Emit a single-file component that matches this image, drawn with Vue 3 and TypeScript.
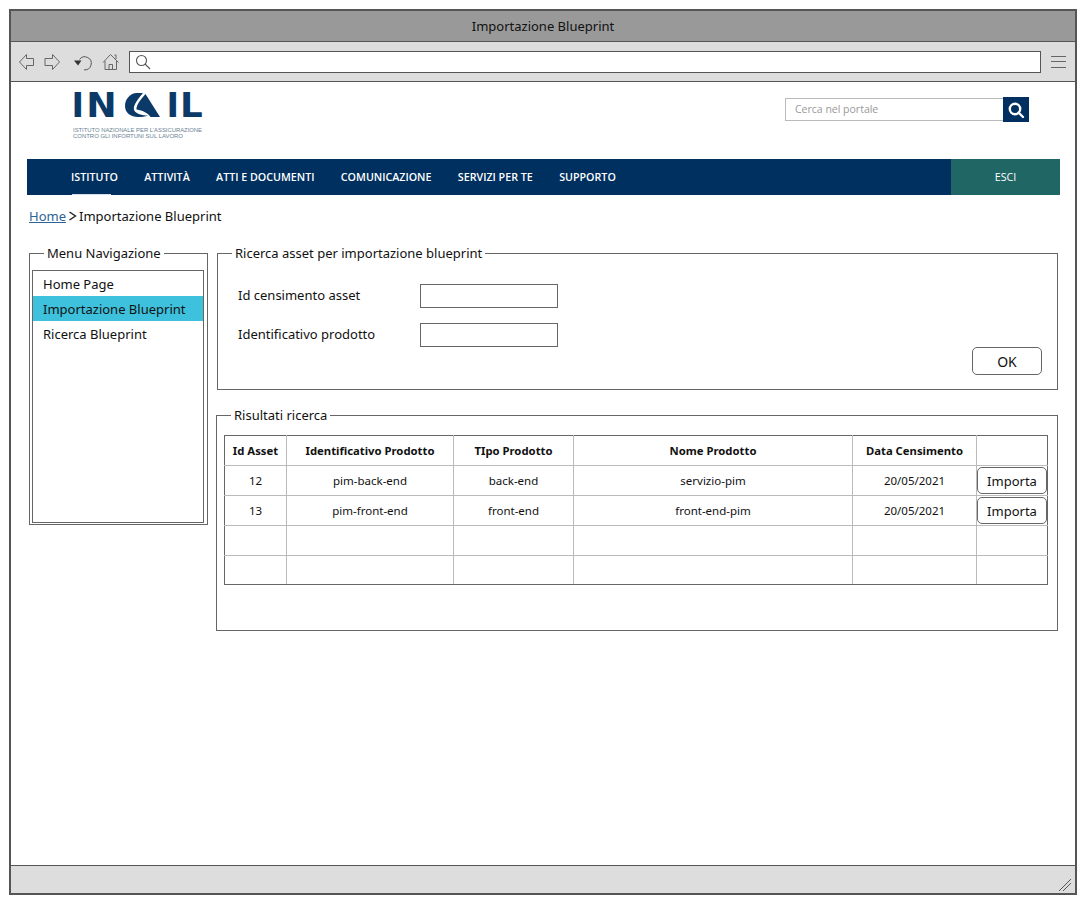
<script setup lang="ts">
interface Row { id: string; code: string; type: string; name: string; date: string; action: boolean }
const navItems: string[] = ['ISTITUTO', 'ATTIVITÀ', 'ATTI E DOCUMENTI', 'COMUNICAZIONE', 'SERVIZI PER TE', 'SUPPORTO']
const menuItems: string[] = ['Home Page', 'Importazione Blueprint', 'Ricerca Blueprint']
const headers: string[] = ['Id Asset', 'Identificativo Prodotto', 'TIpo Prodotto', 'Nome Prodotto', 'Data Censimento', '']
const rows: Row[] = [
  { id: '12', code: 'pim-back-end', type: 'back-end', name: 'servizio-pim', date: '20/05/2021', action: true },
  { id: '13', code: 'pim-front-end', type: 'front-end', name: 'front-end-pim', date: '20/05/2021', action: true },
  { id: '', code: '', type: '', name: '', date: '', action: false },
  { id: '', code: '', type: '', name: '', date: '', action: false }
]
</script>

<template>
  <div class="window">
    <div class="titlebar">Importazione Blueprint</div>
    <div class="toolbar">
      <svg class="tool-icons" width="104" height="22" viewBox="0 0 104 22" fill="none" stroke="#666" stroke-width="1">
        <path d="M1.5 11 L8.5 3.5 V7.5 H15.5 V14.5 H8.5 V18.5 Z" />
        <path d="M41.5 11 L34.5 3.5 V7.5 H27 V14.5 H34.5 V18.5 Z" />
        <path d="M61.5 8.5 A6.5 6.5 0 1 1 66 18.8" stroke="#555" />
        <path d="M56 9.5 H63.5 L60 14.5 Z" fill="#333" stroke="none" />
        <path d="M85 11.5 L92.5 3.5 L100.5 11.5 M87 10 V18.5 H98.5 V10 M91 18.5 V13.5 H94.5 V18.5 M96.5 4 H98 V8" />
      </svg>
      <div class="address">
        <svg width="16" height="16" viewBox="0 0 16 16" fill="none" stroke="#555" stroke-width="1.1">
          <circle cx="6.5" cy="6.5" r="5" />
          <path d="M10 10 L15 15" />
        </svg>
      </div>
      <svg class="burger" width="15" height="12" viewBox="0 0 15 12" stroke="#666" stroke-width="1">
        <path d="M0 .5 H15 M0 5.5 H15 M0 11.5 H15" />
      </svg>
    </div>

    <main class="page">
      <header class="masthead">
        <svg class="logo" width="134" height="56" viewBox="-4 -9 134 56" role="img" aria-label="INAIL">
          <g fill="#0b3a68" font-family="'DejaVu Sans', sans-serif" font-weight="700">
            <text transform="translate(-1.6 24) scale(1.02 1)" font-size="33">I</text>
            <text transform="translate(13.2 24) scale(1.1 1)" font-size="33">N</text>
            <path d="M70 0 H63 C56 1 52 7 52 13 C52 20 58 24 65 24 C69 24 72 23.5 75 22.5 C69 22.5 63 21 61 17 C60 12 65 6 70 0 Z" />
            <path d="M72.5 1 L87 24 H77.5 C75 20 70 17.5 63.5 16.5 C63 12 68 6 72.5 1 Z" />
            <text transform="translate(93.4 24) scale(1.02 1)" font-size="33">I</text>
            <text transform="translate(107 24) scale(1.08 1)" font-size="33">L</text>
          </g>
          <g fill="#6a7f94" font-family="'Liberation Sans', sans-serif" font-size="5.6">
            <text x="0" y="39" textLength="129" lengthAdjust="spacingAndGlyphs">ISTITUTO NAZIONALE PER L'ASSICURAZIONE</text>
            <text x="0" y="44.5" textLength="110" lengthAdjust="spacingAndGlyphs">CONTRO GLI INFORTUNI SUL LAVORO</text>
          </g>
        </svg>
        <div class="search">
          <div class="search-field">Cerca nel portale</div>
          <div class="search-btn">
            <svg width="18" height="18" viewBox="0 0 18 18" fill="none" stroke="#fff" stroke-width="2.4">
              <circle cx="8" cy="8" r="5.2" />
              <path d="M11.5 11.5 L16 16" stroke-linecap="round" />
            </svg>
          </div>
        </div>
      </header>

      <nav class="navbar">
        <div class="nav-items">
          <span v-for="(item, i) in navItems" :key="item" class="nav-item" :class="{ current: i === 0 }">{{ item }}</span>
        </div>
        <div class="logout">ESCI</div>
      </nav>

      <div class="crumbs">
        <a class="crumb-link">Home</a>
        <svg width="9" height="10" viewBox="0 0 9 10" fill="none" stroke="#222" stroke-width="1.4"><path d="M1.5 1 L7.5 5 L1.5 9" /></svg>
        <span>Importazione Blueprint</span>
      </div>

      <div class="columns">
        <fieldset class="box menu-box">
          <legend>Menu Navigazione</legend>
          <ul class="menu">
            <li v-for="(item, i) in menuItems" :key="item" :class="{ active: i === 1 }">{{ item }}</li>
          </ul>
        </fieldset>

        <div class="content">
          <fieldset class="box form-box">
            <legend>Ricerca asset per importazione blueprint</legend>
            <div class="form-row"><label>Id censimento asset</label><input type="text" /></div>
            <div class="form-row"><label>Identificativo prodotto</label><input type="text" /></div>
            <div class="form-actions"><button class="btn ok">OK</button></div>
          </fieldset>

          <fieldset class="box results-box">
            <legend>Risultati ricerca</legend>
            <table class="grid">
              <colgroup>
                <col style="width: 62px" /><col style="width: 167px" /><col style="width: 120px" />
                <col style="width: 279px" /><col style="width: 124px" /><col />
              </colgroup>
              <thead>
                <tr><th v-for="(h, i) in headers" :key="i">{{ h }}</th></tr>
              </thead>
              <tbody>
                <tr v-for="(r, i) in rows" :key="i">
                  <td>{{ r.id }}</td><td>{{ r.code }}</td><td>{{ r.type }}</td><td>{{ r.name }}</td><td>{{ r.date }}</td>
                  <td class="action"><button v-if="r.action" class="btn import">Importa</button></td>
                </tr>
              </tbody>
            </table>
          </fieldset>
        </div>
      </div>
    </main>

    <footer class="statusbar">
      <svg width="14" height="14" viewBox="0 0 14 14" stroke="#555" stroke-width="1" fill="none">
        <path d="M1 13 L13 1 M5 13 L13 5" />
      </svg>
    </footer>
  </div>
</template>

<style>
html, body { margin: 0; background: #fff; }
</style>

<style scoped>
.window {
  box-sizing: border-box;
  width: 1068px;
  height: 886px;
  margin: 9px 0 0 9px;
  border: 2px solid #555;
  display: flex;
  flex-direction: column;
  background: #fff;
  color: #111;
  font-family: "Noto Sans", "Open Sans", sans-serif;
  font-size: 13px;
}
.titlebar {
  height: 30px;
  flex: none;
  background: #999;
  border-bottom: 1px solid #555;
  display: flex;
  align-items: center;
  justify-content: center;
  line-height: 30px;
}
.toolbar {
  height: 40px;
  flex: none;
  box-sizing: border-box;
  background: #ddd;
  border-bottom: 1px solid #555;
  display: flex;
  align-items: center;
  padding-left: 7px;
}
.tool-icons { flex: none; margin-right: 7px; }
.address {
  box-sizing: border-box;
  width: 912px;
  height: 22px;
  flex: none;
  background: #fff;
  border: 1px solid #555;
  display: flex;
  align-items: center;
  padding-left: 5px;
}
.burger { flex: none; margin-left: 10px; }
.page { flex: 1; min-height: 0; padding-left: 16px; padding-right: 15px; }
.masthead {
  height: 77px;
  display: flex;
  justify-content: space-between;
  align-items: flex-start;
  padding: 2px 31px 0 42px;
  box-sizing: border-box;
}
.logo { display: block; }
.search { display: flex; align-items: center; margin-top: 13px; }
.search-field {
  box-sizing: border-box;
  width: 218px;
  height: 23px;
  border: 1px solid #bbb;
  border-right: 0;
  padding-left: 9px;
  line-height: 21px;
  font-family: "Open Sans", sans-serif;
  font-size: 10.5px;
  color: #999;
}
.search-btn {
  width: 26px;
  height: 25px;
  background: #00305f;
  display: flex;
  align-items: center;
  justify-content: center;
}
.navbar {
  height: 36px;
  background: #00305f;
  display: flex;
  justify-content: space-between;
  color: #fff;
  font-family: "Open Sans", sans-serif;
  font-size: 10.7px;
  font-weight: 600;
}
.nav-items { display: flex; gap: 26.4px; padding-left: 44px; }
.nav-item { line-height: 36px; position: relative; }
.nav-item.current::after {
  content: "";
  position: absolute;
  left: 1px;
  width: 39px;
  bottom: 0;
  height: 1px;
  background: #d5dde6;
}
.logout {
  width: 109px;
  background: #206664;
  text-align: center;
  line-height: 36px;
  font-weight: 400;
}
.crumbs {
  height: 42px;
  display: flex;
  align-items: center;
  gap: 2px;
  padding-left: 2px;
  font-size: 13px;
}
.crumb-link { color: #2a6496; text-decoration: underline; }
.columns { display: flex; align-items: flex-start; gap: 9px; padding-left: 2px; padding-top: 7px; }
.box {
  margin: 0;
  min-width: 0;
  box-sizing: border-box;
  border: 1px solid #666;
  padding: 0;
}
.box legend { padding: 0 3px; line-height: 18px; }
.menu-box { width: 179px; height: 281px; padding: 8px 3px 1px 2px; }
.menu-box legend { margin-left: 12px; }
.menu {
  list-style: none;
  margin: 0;
  height: 253px;
  box-sizing: border-box;
  border: 1px solid #666;
  padding: 0;
}
.menu li { box-sizing: border-box; height: 25px; line-height: 25px; padding: 1px 0 0 10px; }
.menu li.active { background: #3dc1dc; }
.content { width: 841px; display: flex; flex-direction: column; gap: 16px; }
.form-box { height: 146px; padding: 22px 15px 0 20px; }
.form-box legend { margin-left: -6px; }
.form-row { display: flex; align-items: center; height: 24px; margin-bottom: 15px; }
.form-row label { width: 182px; padding-bottom: 2px; }
.form-row input {
  box-sizing: border-box;
  width: 138px;
  height: 24px;
  border: 1px solid #666;
  border-radius: 0;
  padding: 0;
  outline: none;
}
.form-actions { display: flex; justify-content: flex-end; margin-top: -15px; }
.btn {
  background: #fff;
  border: 1px solid #666;
  border-radius: 5px;
  color: #111;
  font: inherit;
  padding: 0;
  box-sizing: border-box;
}
.btn.ok { width: 70px; height: 28px; font-size: 14px; }
.results-box { width: 842px; margin-left: -1px; height: 225px; padding: 11px 9px 0 7px; }
.results-box legend { margin-left: 7px; }
.grid {
  width: 824px;
  table-layout: fixed;
  border-collapse: collapse;
  border: 1px solid #666;
  font-size: 11.5px;
}
.grid th, .grid td {
  border: 1px solid #bbb;
  height: 30px;
  padding: 0;
  text-align: center;
  box-sizing: border-box;
}
.grid th { font-weight: 700; font-size: 11.3px; border-top-color: #666; }
.grid tr:last-child td { height: 29px; border-bottom-color: #666; }
.grid tr > :first-child { border-left-color: #666; }
.grid tr > :last-child { border-right-color: #666; }
.grid td.action { vertical-align: middle; }
.btn.import { display: block; width: 70px; height: 27px; font-size: 13px; }
.statusbar {
  height: 28px;
  flex: none;
  box-sizing: border-box;
  background: #ddd;
  border-top: 1px solid #555;
  display: flex;
  justify-content: flex-end;
  align-items: flex-end;
  padding: 0 3px 1px 0;
}
</style>
